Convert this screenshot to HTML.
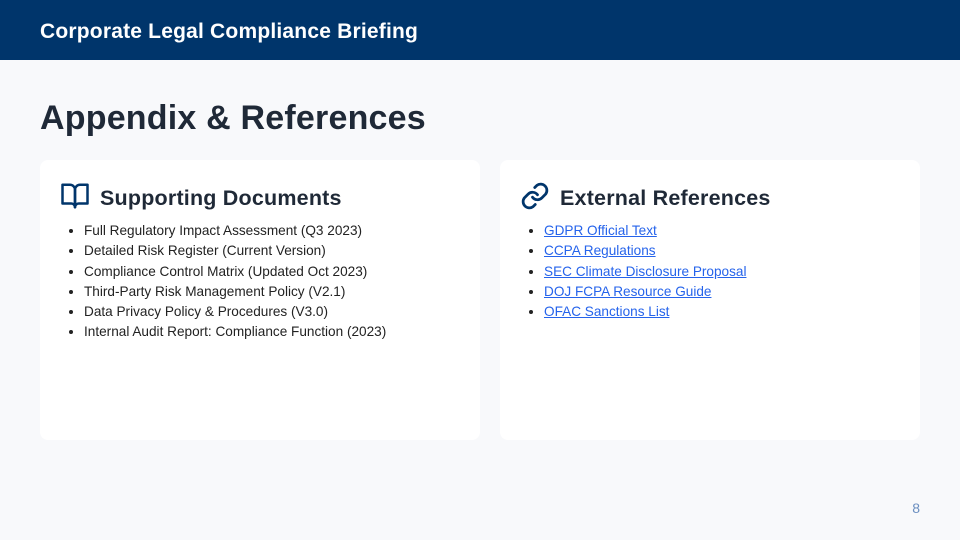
<!DOCTYPE html>
<html><head><style>
*{margin:0;padding:0;box-sizing:border-box}
body{width:960px;height:540px;background:#f8f9fb;font-family:"Liberation Sans",sans-serif;position:relative;overflow:hidden}
.hdr{position:absolute;left:0;top:0;width:960px;height:60px;background:#00356b;color:#fff;font-size:21px;font-weight:bold;padding-left:40px;line-height:63px;letter-spacing:0.2px}
h1{position:absolute;left:40px;top:99px;font-size:34px;font-weight:bold;color:#1f2937;letter-spacing:0.2px}
.card{position:absolute;top:160px;width:440px;height:280px;background:#fff;border-radius:8px}
.card h2{position:absolute;left:60px;top:26px;font-size:21.5px;font-weight:bold;color:#1f2937;letter-spacing:0.2px}
.card svg{position:absolute;left:20px;top:21px}
ul{position:absolute;left:44px;top:61px;font-size:13.6px;color:#222;line-height:20.3px;list-style:disc}
a{color:#2563eb;text-decoration:underline}
.pg{position:absolute;right:40px;top:500px;font-size:14px;color:#6b8fc0}
</style></head><body>
<div class="hdr">Corporate Legal Compliance Briefing</div>
<h1>Appendix &amp; References</h1>
<div class="card" style="left:40px">
<svg width="30" height="30" viewBox="0 0 24 24" fill="none" stroke="#00356b" stroke-width="2" stroke-linejoin="round"><path d="M2 3h6a4 4 0 0 1 4 4v14a3 3 0 0 0-3-3H2z"/><path d="M22 3h-6a4 4 0 0 0-4 4v14a3 3 0 0 1 3-3h7z"/></svg>
<h2>Supporting Documents</h2>
<ul><li>Full Regulatory Impact Assessment (Q3 2023)</li><li>Detailed Risk Register (Current Version)</li><li>Compliance Control Matrix (Updated Oct 2023)</li><li>Third-Party Risk Management Policy (V2.1)</li><li>Data Privacy Policy &amp; Procedures (V3.0)</li><li>Internal Audit Report: Compliance Function (2023)</li></ul>
</div>
<div class="card" style="left:500px;width:420px">
<svg width="30" height="30" viewBox="0 0 24 24" fill="none" stroke="#00356b" stroke-width="2.2" stroke-linecap="round"><path d="M10 13a5 5 0 0 0 7.5.5l3-3a5 5 0 0 0-7-7l-1.7 1.7"/><path d="M14 11a5 5 0 0 0-7.5-.5l-3 3a5 5 0 0 0 7 7l1.7-1.7"/></svg>
<h2>External References</h2>
<ul><li><a>GDPR Official Text</a></li><li><a>CCPA Regulations</a></li><li><a>SEC Climate Disclosure Proposal</a></li><li><a>DOJ FCPA Resource Guide</a></li><li><a>OFAC Sanctions List</a></li></ul>
</div>
<div class="pg">8</div>
</body></html>
